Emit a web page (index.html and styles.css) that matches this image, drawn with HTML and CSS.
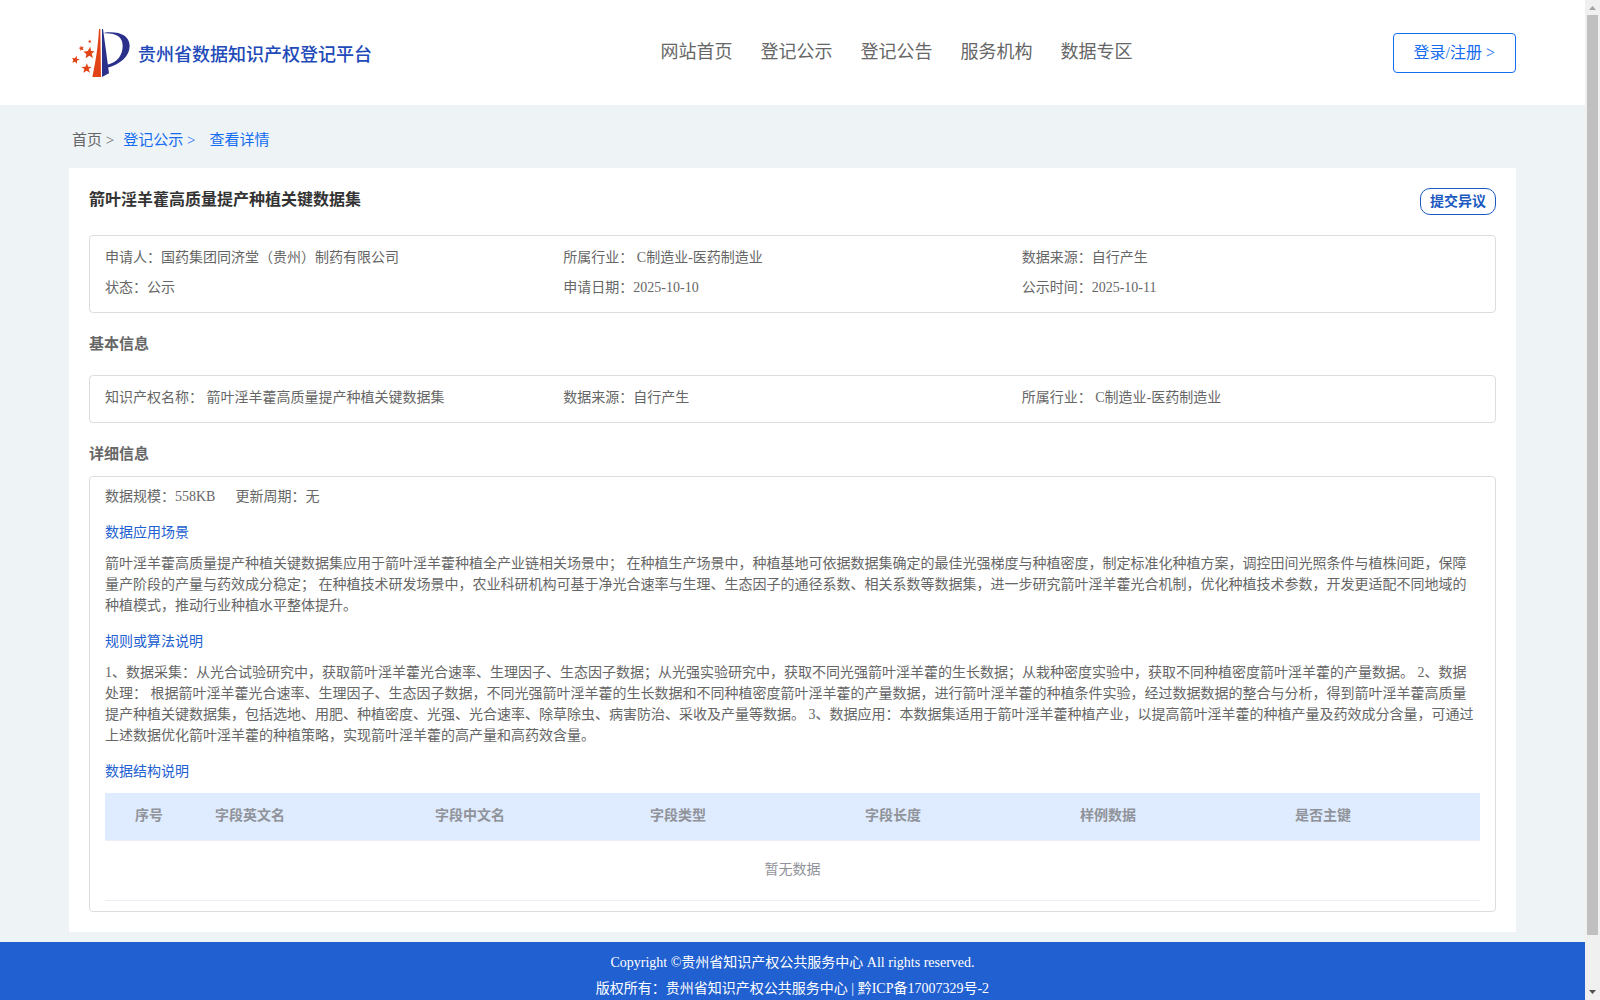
FILE: index.html
```html
<!DOCTYPE html>
<html lang="zh-CN">
<head>
<meta charset="utf-8">
<meta name="viewport" content="width=device-width, initial-scale=1">
<title>贵州省数据知识产权登记平台</title>
<link rel="stylesheet" href="styles.css">
</head>
<body>
<header class="header">
  <a class="brand" href="#">
    <svg class="logo" viewBox="36 24 174 150" aria-hidden="true">
      <path fill="#e24316" d="M117 27h4l2 144H97C108 120 114 80 117 27Z"/>
      <path fill="#2b308b" d="M126 27h3l8 58 10 75-21 11ZM133 38C178 33 208 46 209 77c0 30-26 55-67 66v-9c32-8 46-30 46-57 0-26-19-38-55-37Z"/>
      <g fill="#e24316">
        <path d="m91 80 2 13 11 1-9 7 4 13-11-7-11 8 2-13-9-7 13-2Z"/>
        <path d="m81 130 3 10 11 1-9 6 4 11-10-6-10 6 3-11-9-6 12-1Z"/>
        <path d="m50 107 1 9 8 2-8 4v9l-6-6-8 3 3-8-4-6 9 1Z"/>
        <path d="m62 76 3 5 6-1-3 5 3 5-6-1-4 4v-6l-5-3 6-2Z"/>
        <path d="m88 58 2 4 4-1-2 4 2 3-4-1-3 3v-4l-3-3 4-1Z"/>
      </g>
    </svg>
    <span class="brand-name">贵州省数据知识产权登记平台</span>
  </a>
  <nav class="nav">
    <a href="#">网站首页</a>
    <a href="#">登记公示</a>
    <a href="#">登记公告</a>
    <a href="#">服务机构</a>
    <a href="#">数据专区</a>
  </nav>
  <button class="login" type="button">登录/注册 &gt;</button>
</header>

<main class="main">
  <nav class="crumbs">
    <a class="crumb-home" href="#">首页 &gt;</a>
    <a class="crumb-list" href="#">登记公示 &gt;</a>
    <a href="#">查看详情</a>
  </nav>

  <article class="card">
    <div class="card-head">
      <h1>箭叶淫羊藿高质量提产种植关键数据集</h1>
      <button class="objection" type="button">提交异议</button>
    </div>

    <div class="box facts">
      <span>申请人：国药集团同济堂（贵州）制药有限公司</span>
      <span>所属行业： C制造业-医药制造业</span>
      <span>数据来源：自行产生</span>
      <span>状态：公示</span>
      <span>申请日期：2025-10-10</span>
      <span>公示时间：2025-10-11</span>
    </div>

    <h2 class="basic-title">基本信息</h2>
    <div class="box facts">
      <span>知识产权名称： 箭叶淫羊藿高质量提产种植关键数据集</span>
      <span>数据来源：自行产生</span>
      <span>所属行业： C制造业-医药制造业</span>
    </div>

    <h2 class="detail-title">详细信息</h2>
    <div class="box detail">
      <div class="scale"><span>数据规模：558KB</span><span>更新周期：无</span></div>
      <h3>数据应用场景</h3>
      <p>箭叶淫羊藿高质量提产种植关键数据集应用于箭叶淫羊藿种植全产业链相关场景中； 在种植生产场景中，种植基地可依据数据集确定的最佳光强梯度与种植密度，制定标准化种植方案，调控田间光照条件与植株间距，保障量产阶段的产量与药效成分稳定； 在种植技术研发场景中，农业科研机构可基于净光合速率与生理、生态因子的通径系数、相关系数等数据集，进一步研究箭叶淫羊藿光合机制，优化种植技术参数，开发更适配不同地域的种植模式，推动行业种植水平整体提升。</p>
      <h3>规则或算法说明</h3>
      <p>1、数据采集：从光合试验研究中，获取箭叶淫羊藿光合速率、生理因子、生态因子数据；从光强实验研究中，获取不同光强箭叶淫羊藿的生长数据；从栽种密度实验中，获取不同种植密度箭叶淫羊藿的产量数据。 2、数据处理： 根据箭叶淫羊藿光合速率、生理因子、生态因子数据，不同光强箭叶淫羊藿的生长数据和不同种植密度箭叶淫羊藿的产量数据，进行箭叶淫羊藿的种植条件实验，经过数据数据的整合与分析，得到箭叶淫羊藿高质量提产种植关键数据集，包括选地、用肥、种植密度、光强、光合速率、除草除虫、病害防治、采收及产量等数据。 3、数据应用：本数据集适用于箭叶淫羊藿种植产业，以提高箭叶淫羊藿的种植产量及药效成分含量，可通过上述数据优化箭叶淫羊藿的种植策略，实现箭叶淫羊藿的高产量和高药效含量。</p>
      <h3>数据结构说明</h3>
      <table class="fields">
        <colgroup>
          <col class="col-index"><col class="col-name"><col class="col"><col class="col"><col class="col"><col class="col"><col>
        </colgroup>
        <thead>
          <tr><th>序号</th><th>字段英文名</th><th>字段中文名</th><th>字段类型</th><th>字段长度</th><th>样例数据</th><th>是否主键</th></tr>
        </thead>
        <tbody>
          <tr><td colspan="7">暂无数据</td></tr>
        </tbody>
      </table>
    </div>
  </article>
</main>

<footer class="footer">
  <div>Copyright ©贵州省知识产权公共服务中心 All rights reserved.</div>
  <div>版权所有：贵州省知识产权公共服务中心 | <a href="#">黔ICP备17007329号-2</a></div>
</footer>

<div class="scrollbar" aria-hidden="true">
  <svg viewBox="0 0 15 15"><path fill="#a3a3a3" d="M4 10h7L7.500 6Z"/></svg>
  <div class="thumb"></div>
  <svg class="down" viewBox="0 0 15 15"><path fill="#505050" d="M4 5h7L7.500 9Z"/></svg>
</div>
</body>
</html>
```
FILE: styles.css
```css
* {
  box-sizing: border-box;
}

html {
  scrollbar-width: none;
}

body {
  margin: 0;
  padding-right: 15px;
  background: #eef3f6;
  color: #666;
  font: 14px/21px "Liberation Serif", "Noto Sans CJK SC", serif;
  text-autospace: no-autospace;
  text-spacing-trim: space-all;
}

a {
  color: inherit;
  text-decoration: none;
}

h1, h2, h3, p {
  margin: 0;
}

button {
  background: #fff;
  font-family: inherit;
  cursor: pointer;
}

.header {
  display: grid;
  grid-template-columns: 1fr auto 1fr;
  align-items: center;
  height: 105px;
  padding: 0 69px;
  background: #fff;
}

.brand {
  display: flex;
  align-items: center;
  gap: 8px;
  padding-left: 3px;
  color: #2149b8;
  font-size: 18px;
  font-weight: 500;
}

.brand-name {
  padding-top: 6px;
}

.logo {
  width: 58px;
  height: 50px;
}

.nav {
  display: flex;
  gap: 28px;
  margin-left: 208px;
  font-size: 18px;
}

.login {
  justify-self: end;
  height: 40px;
  padding: 0 20px 4px;
  border: 1px solid #146cf0;
  border-radius: 4px;
  color: #146cf0;
  font-size: 16px;
}

.main {
  padding: 0 69px 10px;
}

.crumbs {
  display: flex;
  align-items: center;
  height: 63px;
  padding: 8px 3px 0;
  color: #146cf0;
  font-size: 15px;
}

.crumb-home {
  margin-right: 9px;
  color: #666;
}

.crumb-list {
  margin-right: 14px;
}

.card {
  padding: 20px;
  background: #fff;
}

.card-head {
  display: flex;
  justify-content: space-between;
  align-items: flex-start;
  margin-bottom: 20px;
}

h1 {
  color: #333;
  font-size: 16px;
  line-height: 24px;
}

.objection {
  height: 27px;
  padding: 0 9px 4px;
  border: 1px solid #1c59c0;
  border-radius: 10px;
  color: #1c59c0;
  font-size: 14px;
  font-weight: bold;
}

.box {
  padding: 7px 15px 9px;
  border: 1px solid #ddd;
  border-radius: 4px;
}

.facts {
  display: grid;
  grid-template-columns: repeat(3, 1fr);
  line-height: 30px;
}

h2 {
  font-size: 15px;
  line-height: 20px;
}

.basic-title {
  margin: 21px 0;
}

.detail-title {
  margin: 21px 0 12px;
}

.detail {
  padding: 9px 15px 10px;
}

.scale {
  display: flex;
  gap: 20px;
}

h3 {
  margin: 15px 0 10px;
  color: #2160d0;
  font-size: 14px;
  font-weight: normal;
  line-height: 21px;
}

.fields {
  width: 100%;
  margin-top: 11px;
  border-collapse: collapse;
  table-layout: fixed;
  color: #909399;
}

.col-index {
  width: 100px;
}

.col-name {
  width: 16%;
}

.col {
  width: 215px;
}

.fields th {
  height: 47px;
  padding: 0 10px 2px;
  border-bottom: 1px solid #ebeef5;
  background: #dfecff;
  text-align: left;
}

.fields th:first-child {
  padding-left: 30px;
}

.fields td {
  height: 60px;
  padding: 0 0 2px;
  border-bottom: 1px solid #ebeef5;
  text-align: center;
}

.footer {
  padding: 8px 0 0;
  background: #2160d0;
  color: #fff;
  line-height: 26px;
  text-align: center;
}

.scrollbar {
  position: fixed;
  top: 0;
  right: 0;
  bottom: 0;
  display: flex;
  flex-direction: column;
  width: 15px;
  background: #f0f0f0;
}

.scrollbar svg {
  width: 15px;
  height: 15px;
}

.thumb {
  height: 92%;
  margin: 0 2px;
  background: #c0c0c0;
}

.down {
  margin-top: auto;
}
```
